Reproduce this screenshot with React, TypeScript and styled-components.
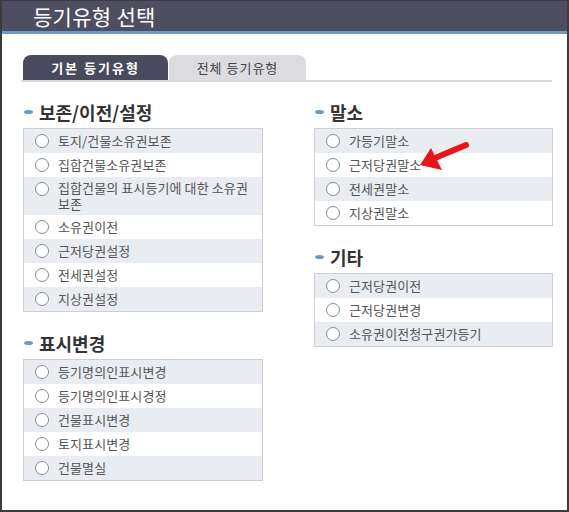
import React from "react";
import styled, { createGlobalStyle } from "styled-components";

const GlobalStyle = createGlobalStyle`
  body {
    margin: 0;
    background: #fff;
    font-family: "Noto Sans CJK KR", "Noto Sans", sans-serif;
  }
`;

const Frame = styled.div`
  width: 569px;
  height: 512px;
  box-sizing: border-box;
  border: 2px solid #3c3c3c;
  border-top-width: 1px;
  background: #fff;
`;

const Header = styled.div`
  height: 30px;
  background-color: #4e4d61;
  border-bottom: 3px solid #6b9bc5;
  color: #fff;
  font-size: 21px;
  line-height: 30px;
  padding-left: 31px;
  letter-spacing: 0.3px;
`;

const Content = styled.div`
  padding: 21px 15px 0 19px;
`;

const TabBar = styled.div`
  display: flex;
  border-bottom: 2px solid #d9d9d9;
`;

const Tab = styled.div<{ $active?: boolean }>`
  height: 25px;
  line-height: 26px;
  text-align: center;
  font-size: 13px;
  border-radius: 8px 8px 0 0;
  margin-left: ${(p) => (p.$active ? "2px" : "1px")};
  width: ${(p) => (p.$active ? "145px" : "137px")};
  background-color: ${(p) => (p.$active ? "#4a4a5e" : "#dcdbe0")};
  color: ${(p) => (p.$active ? "#fff" : "#444")};
  font-weight: ${(p) => (p.$active ? 700 : 400)};
  letter-spacing: ${(p) => (p.$active ? "2px" : "1px")};
`;

const Columns = styled.div`
  display: grid;
  grid-template-columns: 240px 239px;
  column-gap: 51px;
  margin-top: 18px;
  padding-left: 2px;
`;

const Section = styled.section`
  margin-bottom: 19px;
`;

const Heading = styled.h3`
  display: flex;
  align-items: center;
  height: 24px;
  margin: 0 0 4px 0;
  padding-left: 1px;
  font-size: 18px;
  font-weight: 700;
  color: #333;
  &::before {
    content: "";
    width: 9px;
    height: 4px;
    border-radius: 50%;
    background-color: #6a9bc6;
    margin-right: 6px;
  }
`;

const List = styled.ul`
  list-style: none;
  margin: 0;
  padding: 0;
  border: 1px solid #cfcfcf;
`;

const Row = styled.li<{ $tall?: boolean }>`
  display: flex;
  align-items: ${(p) => (p.$tall ? "flex-start" : "center")};
  min-height: 24px;
  box-sizing: border-box;
  padding: ${(p) => (p.$tall ? "3px 8px 3px 11px" : "0 8px 0 11px")};
  &:nth-child(odd) {
    background-color: #e9edf1;
  }
  &:nth-child(even) {
    background-color: #fff;
  }
`;

const Radio = styled.span<{ $tall?: boolean }>`
  flex: none;
  width: 12px;
  height: 12px;
  border: 1px solid #8a8a8a;
  border-radius: 50%;
  background: #fff;
  margin-right: 9px;
  margin-top: ${(p) => (p.$tall ? "2px" : "0")};
`;

const Label = styled.span`
  position: relative;
  font-size: 13px;
  line-height: 16px;
  letter-spacing: 0.1px;
  color: #555;
`;

const Arrow = styled.svg`
  position: absolute;
  left: calc(100% - 2px);
  top: -16px;
`;

type Item = { text: string; marked?: boolean };

const RedArrow = () => (
  <Arrow width="52" height="32" viewBox="0 0 52 32">
    <line x1="47" y1="4" x2="16" y2="17" stroke="#e8161c" strokeWidth="6" strokeLinecap="round" />
    <polygon points="1,24 12,7 23,29" fill="#e8161c" />
  </Arrow>
);

const Group = ({ title, items }: { title: string; items: Item[] }) => (
  <Section>
    <Heading>{title}</Heading>
    <List>
      {items.map((it) => {
        const tall = it.text.length > 16;
        return (
          <Row key={it.text} $tall={tall}>
            <Radio $tall={tall} />
            <Label>
              {it.text}
              {it.marked && <RedArrow />}
            </Label>
          </Row>
        );
      })}
    </List>
  </Section>
);

const left = [
  {
    title: "보존/이전/설정",
    items: [
      { text: "토지/건물소유권보존" },
      { text: "집합건물소유권보존" },
      { text: "집합건물의 표시등기에 대한 소유권 보존" },
      { text: "소유권이전" },
      { text: "근저당권설정" },
      { text: "전세권설정" },
      { text: "지상권설정" },
    ],
  },
  {
    title: "표시변경",
    items: [
      { text: "등기명의인표시변경" },
      { text: "등기명의인표시경정" },
      { text: "건물표시변경" },
      { text: "토지표시변경" },
      { text: "건물멸실" },
    ],
  },
];

const right = [
  {
    title: "말소",
    items: [
      { text: "가등기말소" },
      { text: "근저당권말소", marked: true },
      { text: "전세권말소" },
      { text: "지상권말소" },
    ],
  },
  {
    title: "기타",
    items: [
      { text: "근저당권이전" },
      { text: "근저당권변경" },
      { text: "소유권이전청구권가등기" },
    ],
  },
];

const App = () => {
  return (
    <>
      <GlobalStyle />
      <Frame>
        <Header>등기유형 선택</Header>
        <Content>
          <TabBar>
            <Tab $active>기본 등기유형</Tab>
            <Tab>전체 등기유형</Tab>
          </TabBar>
          <Columns>
            <div>
              {left.map((g) => (
                <Group key={g.title} title={g.title} items={g.items} />
              ))}
            </div>
            <div>
              {right.map((g) => (
                <Group key={g.title} title={g.title} items={g.items} />
              ))}
            </div>
          </Columns>
        </Content>
      </Frame>
    </>
  );
};

export default App;
